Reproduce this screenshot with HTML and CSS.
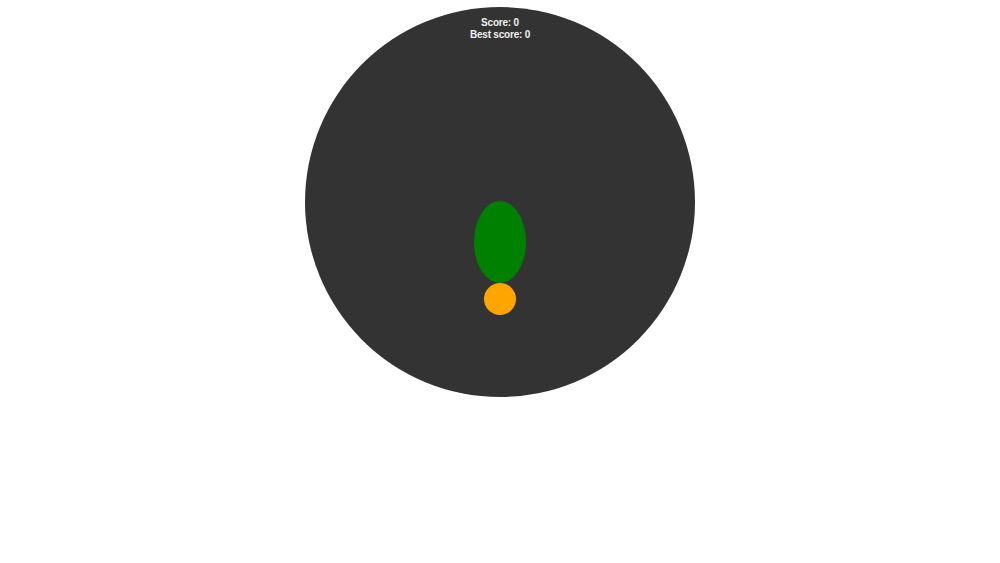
FILE: index.html
```html
<!DOCTYPE html>
<html>
<head>
<meta charset="utf-8">
<link rel="stylesheet" href="styles.css">
</head>
<body>
<div class="stage">
  <div class="arena">
    <div class="scores">
      <div>Score: 0</div>
      <div>Best score: 0</div>
    </div>
    <div class="player"></div>
    <div class="ball"></div>
  </div>
</div>
</body>
</html>
```
FILE: styles.css
```css
html, body {
  margin: 0;
  padding: 0;
  background: #ffffff;
}
.stage {
  display: flex;
  justify-content: center;
  padding-top: 7px;
}
.arena {
  position: relative;
  width: 390px;
  height: 390px;
  border-radius: 50%;
  background: #333333;
  box-sizing: border-box;
  padding-top: 10px;
}
.scores {
  font-family: "Liberation Sans", Arial, sans-serif;
  font-weight: bold;
  font-size: 10px;
  line-height: 12px;
  letter-spacing: -0.2px;
  color: #f0f0f0;
  text-align: center;
}
.player {
  position: absolute;
  left: 169px;
  top: 194px;
  width: 52px;
  height: 82px;
  border-radius: 50%;
  background: #008000;
}
.ball {
  position: absolute;
  left: 179px;
  top: 276px;
  width: 32px;
  height: 32px;
  border-radius: 50%;
  background: #ffa500;
}
```
